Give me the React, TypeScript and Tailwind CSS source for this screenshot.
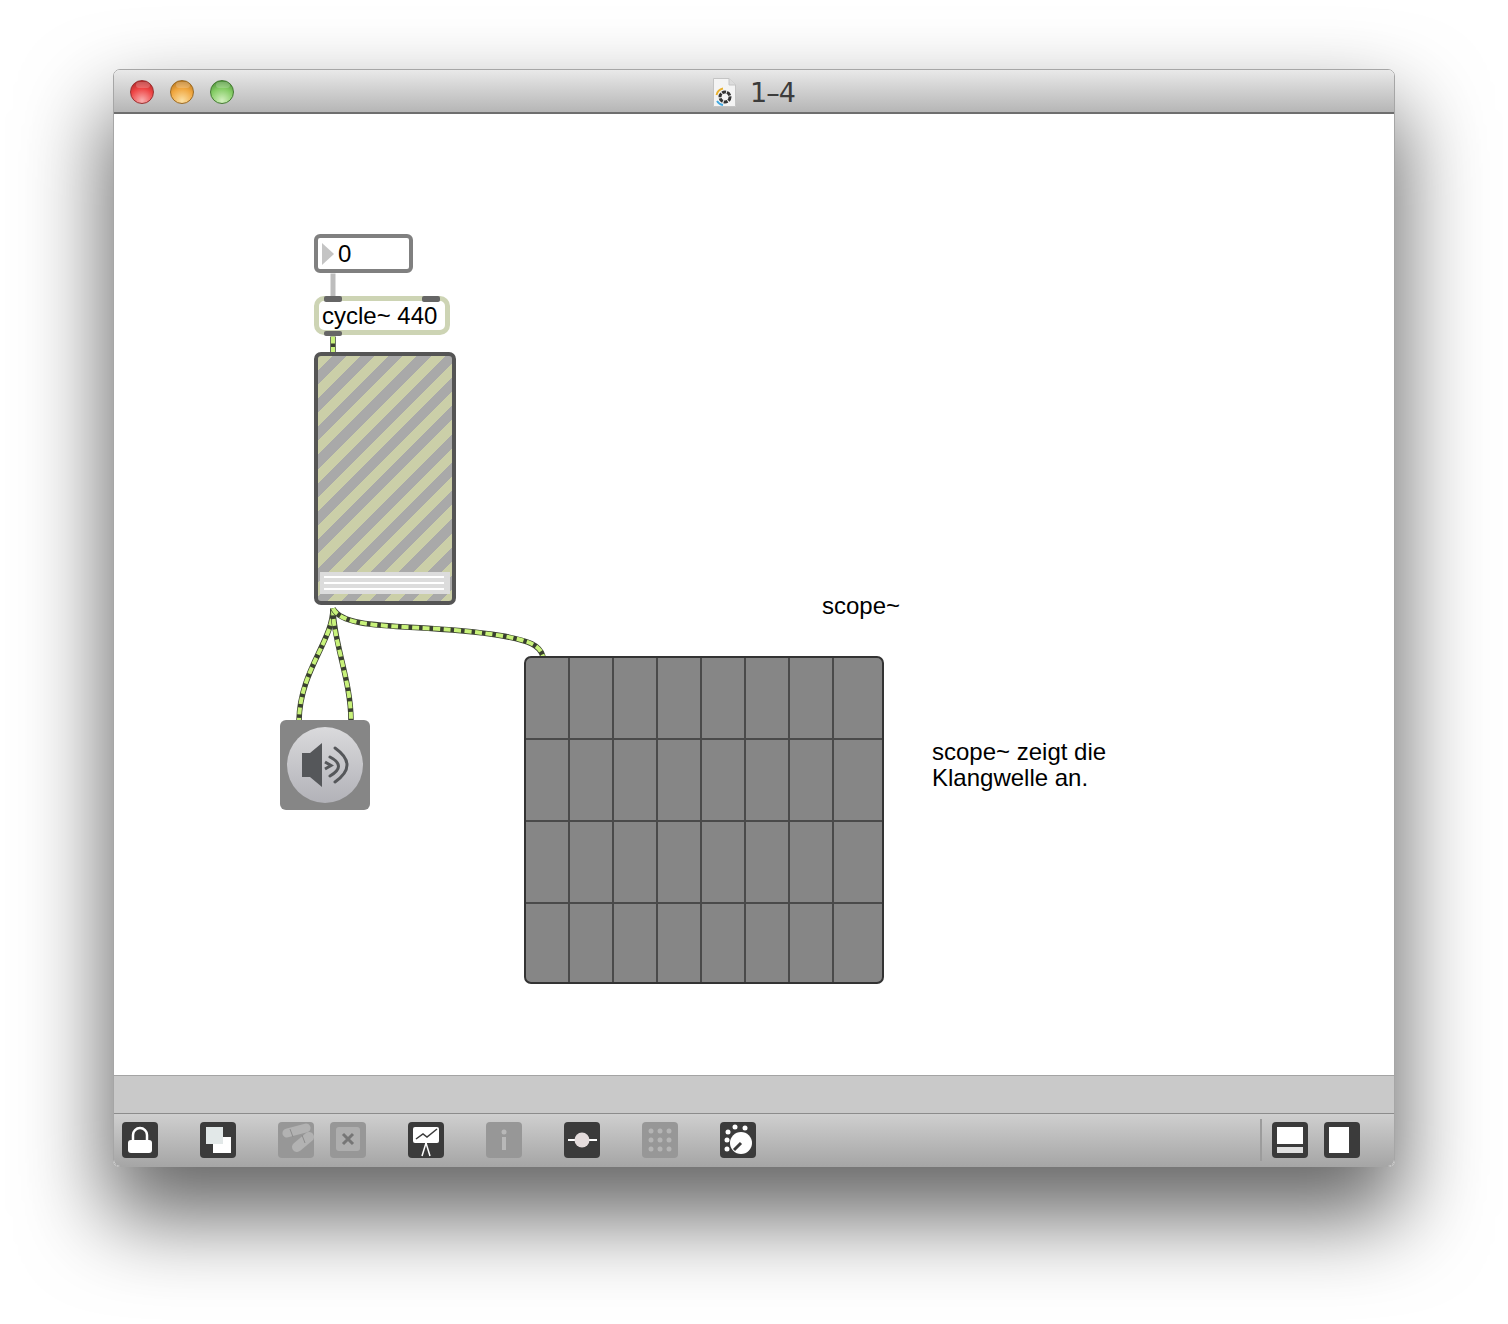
import React from 'react';

const font = { fontFamily: '"Liberation Sans", Arial, sans-serif' };

const Tile = ({ dim, children }: { dim?: boolean; children: React.ReactNode }) => (
  <div className={`w-9 h-9 shrink-0 rounded-[4px] ${dim ? 'bg-[#979797]' : 'bg-[#3b3b3b]'}`}>
    <svg viewBox="0 0 36 36" className={`w-9 h-9 block ${dim ? 'blur-[0.6px]' : ''}`}>{children}</svg>
  </div>
);

const Light = ({ className }: { className: string }) => (
  <div className={`relative w-6 h-6 rounded-full overflow-hidden ${className}`}>
    <div className="absolute left-[5px] top-[1px] w-[14px] h-[6px] rounded-full bg-white/20" />
  </div>
);

const Cord = ({ d }: { d: string }) => (
  <>
    <path d={d} fill="none" stroke="#3a4030" strokeWidth="5.5" />
    <path d={d} fill="none" stroke="#c8f27a" strokeWidth="4" strokeDasharray="7 3.5" />
  </>
);

const App = () => {
  const cells = Array.from({ length: 32 }, (_, i) => i);

  return (
    <div className="w-[1508px] h-[1324px] bg-white pt-[69px] pl-[113px] overflow-hidden" style={font}>
      <div className="w-[1282px] h-[1098px] flex flex-col border border-[#a6a6a6] rounded-[7px] overflow-hidden shadow-[0_45px_85px_6px_rgba(0,0,0,0.6)]">
        {/* title bar */}
        <div className="relative h-[44px] shrink-0 flex items-center pt-[2px] bg-gradient-to-b from-[#e9e9e9] to-[#b6b6b6] border-b-2 border-[#6e6e6e]">
          <div className="flex gap-4 ml-4">
            <Light className="bg-[radial-gradient(circle_at_50%_90%,#f9b0b0,#ee4444_55%,#9c2020)] border border-[#993030]" />
            <Light className="bg-[radial-gradient(circle_at_50%_90%,#fbe0a4,#f0a63e_55%,#a66a1a)] border border-[#9a6a24]" />
            <Light className="bg-[radial-gradient(circle_at_50%_90%,#d4f0c0,#84cc64_55%,#3f7f2f)] border border-[#447a32]" />
          </div>
          <div className="absolute left-[599px] top-[8px] flex items-center gap-[14px]">
            <svg width="23" height="29" viewBox="0 0 23 29">
              <path d="M0.5 0.5 H16 L22.5 7 V28.5 H0.5 Z" fill="#f4f4f4" stroke="#c4c4c4" />
              <path d="M16 0.5 V7 H22.5" fill="#dcdcdc" stroke="#c4c4c4" />
              <circle cx="12" cy="19" r="5" fill="none" stroke="#333" strokeWidth="3" strokeDasharray="4 1" />
              <path d="M3.5 17 A8.5 8.5 0 0 1 10 10.5" fill="none" stroke="#e8b030" strokeWidth="1.8" />
              <path d="M4 23 A8.5 8.5 0 0 0 10 27" fill="none" stroke="#40a8e0" strokeWidth="1.8" />
            </svg>
            <span className="text-[27px] leading-none text-[#3c3c3c]" style={{ fontFamily: '"DejaVu Sans", sans-serif', letterSpacing: '-1px' }}>1–4</span>
          </div>
        </div>

        {/* patcher canvas */}
        <div className="relative flex-1 bg-white text-black text-[24px] leading-[26px]">
          <svg className="absolute inset-0 w-full h-full" viewBox="114 114 1280 960">
            <path d="M333 273 V297" stroke="#bdbdbd" strokeWidth="5" fill="none" />
            <Cord d="M333 336 V353" />
            <Cord d="M333 608 C333 640 300 670 299 720" />
            <Cord d="M333 608 C333 640 351 680 351 720" />
            <Cord d="M333 608 C345 632 420 622 500 635 C530 640 540 645 543 656" />
          </svg>

          {/* number box */}
          <div className="absolute left-[200px] top-[120px] w-[99px] h-[39px] flex items-center bg-white border-4 border-[#808080] rounded-[6px]">
            <div className="w-0 h-0 ml-[4px] border-y-[11px] border-y-transparent border-l-[12px] border-l-[#c4c4c4]" />
            <span className="ml-[4px]">0</span>
          </div>

          {/* cycle~ object */}
          <div className="absolute left-[200px] top-[182px] w-[136px] h-[39px] flex items-center pl-[3px] bg-white border-[5px] border-[#cdd4b4] rounded-[10px]">
            <span className="whitespace-nowrap">cycle~ 440</span>
            <div className="absolute left-[5px] top-[-5px] w-[18px] h-[6px] rounded-[2px] bg-[#666]" />
            <div className="absolute left-[103px] top-[-5px] w-[18px] h-[6px] rounded-[2px] bg-[#666]" />
            <div className="absolute left-[5px] bottom-[-6px] w-[18px] h-[5px] rounded-[2px] bg-[#666]" />
          </div>

          {/* meter~ */}
          <div className="absolute left-[200px] top-[238px] w-[142px] h-[253px] border-4 border-[#555] rounded-[7px] bg-[repeating-linear-gradient(135deg,#cbcfa8_0,#cbcfa8_10px,#a9a9a9_10px,#a9a9a9_20px)]">
            <div className="absolute left-[2px] right-[2px] top-[216px] h-[22px] flex flex-col gap-[4px] pl-[4px] pr-[6px] py-[4px] bg-[#dcdcdc]">
              <div className="h-[2px] bg-white" />
              <div className="h-[2px] bg-white" />
              <div className="h-[2px] bg-white" />
            </div>
          </div>

          {/* ezdac~ */}
          <div className="absolute left-[166px] top-[606px] w-[90px] h-[90px] flex items-center justify-center rounded-[6px] bg-[#868686]">
            <div className="w-[76px] h-[76px] rounded-full bg-gradient-to-b from-[#dadadc] to-[#b2b2b8] flex items-center justify-center">
              <svg width="76" height="76" viewBox="0 0 76 76">
                <path d="M15 26 H23 L35 16 V60 L23 50 H15 Z" fill="#55575a" />
                <path d="M38 35 L44 38.5 L38 42" fill="none" stroke="#55575a" strokeWidth="3" />
                <path d="M43 30 Q60 39 43 49" fill="none" stroke="#55575a" strokeWidth="3" strokeLinecap="round" />
                <path d="M48 21 Q72 38 48 55" fill="none" stroke="#55575a" strokeWidth="3" strokeLinecap="round" />
              </svg>
            </div>
          </div>

          {/* scope~ */}
          <div className="absolute left-[410px] top-[542px] w-[360px] h-[328px] grid grid-cols-[repeat(7,44px)_1fr] grid-rows-[repeat(3,82px)_1fr] bg-[#868686] border-2 border-[#333] rounded-[7px] overflow-hidden">
            {cells.map((i) => (
              <div
                key={i}
                className={`border-[#4a4a4a] ${i % 8 === 7 ? '' : 'border-r-2'} ${i >= 24 ? '' : 'border-b-2'}`}
              />
            ))}
          </div>

          <div className="absolute left-[708px] top-[479px]">scope~</div>
          <div className="absolute left-[818px] top-[625px]">
            scope~ zeigt die
            <br />
            Klangwelle an.
          </div>
        </div>

        {/* status strip */}
        <div className="h-[39px] shrink-0 bg-[#c9c9c9] border-t border-[#a4a4a4] border-b border-b-[#8c8c8c]" />

        {/* toolbar */}
        <div className="h-[52px] shrink-0 flex items-center pl-2 pr-[34px] pb-[1px] bg-gradient-to-b from-[#cfcfcf] to-[#a6a6a6]">
          <Tile>
            <path d="M11 18 V13 A7 7 0 0 1 25 13 V18" fill="none" stroke="#fff" strokeWidth="2.5" />
            <rect x="6" y="18" width="24" height="13" rx="3" fill="#fff" />
          </Tile>
          <div className="ml-[42px]">
            <Tile>
              <rect x="13" y="15" width="18" height="16" fill="#fff" />
              <rect x="6" y="5" width="17" height="17" fill="#e2e8e8" />
            </Tile>
          </div>
          <div className="ml-[42px]">
            <Tile dim>
              <path d="M9 11 L28 6" stroke="#b2b2b2" strokeWidth="9" strokeLinecap="round" />
              <path d="M19 25 L31 15" stroke="#b2b2b2" strokeWidth="10" strokeLinecap="round" />
              <path d="M12 7 L15 15 M24 13 L27 21" stroke="#8c8c8c" strokeWidth="1" />
            </Tile>
          </div>
          <div className="ml-4">
            <Tile dim>
              <rect x="6" y="5" width="24" height="24" rx="3" fill="#aeaeae" />
              <path d="M13 12 L23 22 M23 12 L13 22" stroke="#767676" strokeWidth="3" />
            </Tile>
          </div>
          <div className="ml-[42px]">
            <Tile>
              <rect x="5" y="5" width="26" height="16" rx="2" fill="#fff" />
              <path d="M8 17 L15 12 L19 15 L29 7" fill="none" stroke="#3b3b3b" strokeWidth="1.5" />
              <path d="M18 21 L14 34 M18 21 L22 34" stroke="#fff" strokeWidth="1.5" />
            </Tile>
          </div>
          <div className="ml-[42px]">
            <Tile dim>
              <circle cx="18" cy="10" r="2.5" fill="#b8b8b8" />
              <rect x="16" y="15" width="4" height="13" fill="#b8b8b8" />
            </Tile>
          </div>
          <div className="ml-[42px]">
            <Tile>
              <rect x="4" y="17" width="29" height="2" fill="#fff" />
              <circle cx="18" cy="18" r="7.5" fill="#e4dcdc" />
            </Tile>
          </div>
          <div className="ml-[42px]">
            <Tile dim>
              {[9, 18, 27].flatMap((y) =>
                [9, 18, 27].map((x) => <circle key={`${x}-${y}`} cx={x} cy={y} r="2.5" fill="#b4b4b4" />)
              )}
            </Tile>
          </div>
          <div className="ml-[42px]">
            <Tile>
              <circle cx="21" cy="21" r="11" fill="#fff" />
              <path d="M21 21 L14 28" stroke="#3b3b3b" strokeWidth="3" />
              <circle cx="7" cy="18" r="2.5" fill="#fff" />
              <circle cx="8" cy="10" r="2.5" fill="#fff" />
              <circle cx="15" cy="5" r="2.5" fill="#fff" />
              <circle cx="25" cy="6" r="2.5" fill="#fff" />
              <circle cx="7" cy="27" r="2.5" fill="#fff" />
            </Tile>
          </div>
          <div className="ml-auto w-[2px] h-[42px] bg-[#9c9c9c] mr-[10px]" />
          <Tile>
            <rect x="5" y="5" width="26" height="17" fill="#fff" />
            <rect x="5" y="25" width="26" height="6" fill="#e0e0e0" />
          </Tile>
          <div className="ml-4">
            <Tile>
              <rect x="5" y="5" width="20" height="26" fill="#fff" />
            </Tile>
          </div>
        </div>
      </div>
    </div>
  );
};

export default App;
